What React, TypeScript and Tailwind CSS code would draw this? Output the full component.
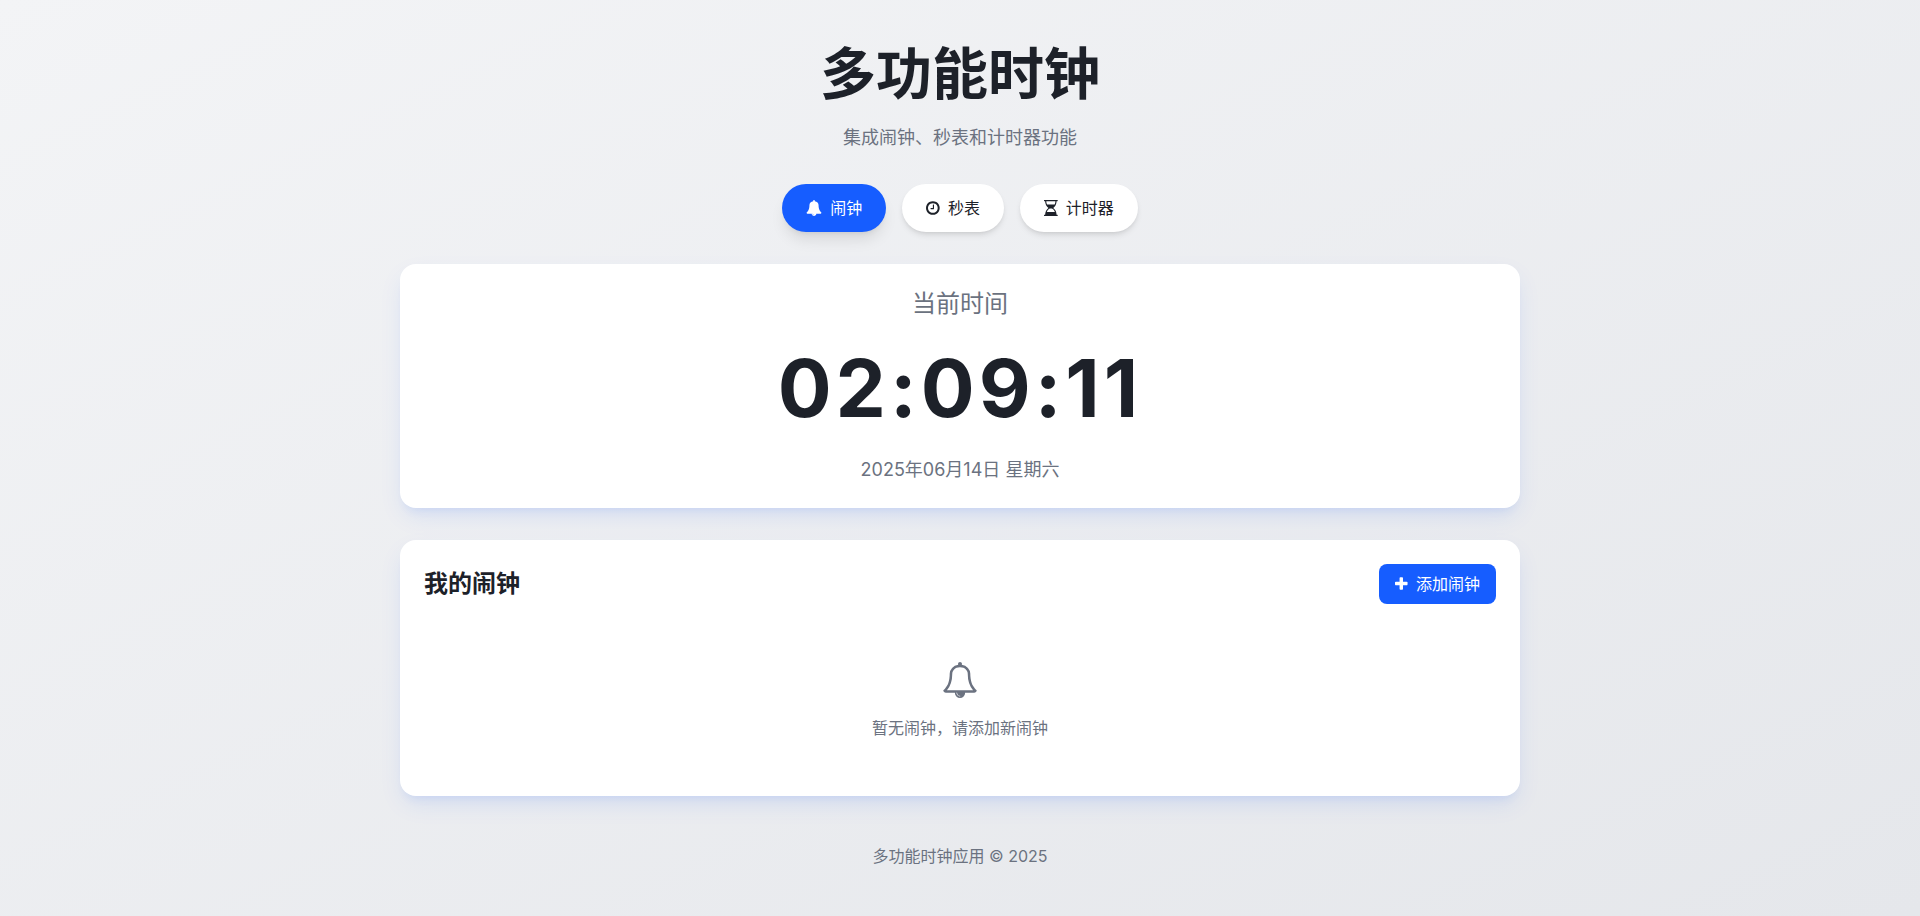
import { useState } from 'react'

const ICONS = {
  bell: {
    viewBox: '0 0 1792 1792',
    path: 'M912 1696q0-16-16-16-59 0-101.5-42.5t-42.5-101.5q0-16-16-16t-16 16q0 73 51.5 124.5t124.5 51.5q16 0 16-16zm816-288q0 52-38 90t-90 38h-448q0 106-75 181t-181 75-181-75-75-181h-448q-52 0-90-38t-38-90q50-42 91-88t85-119.5 74.5-158.5 50-206 19.5-260q0-152 117-282.5t307-158.5q-8-19-8-39 0-40 28-68t68-28 68 28 28 68q0 20-8 39 190 28 307 158.5t117 282.5q0 139 19.5 260t50 206 74.5 158.5 85 119.5 91 88z',
  },
  bellOutline: {
    viewBox: '0 0 1792 1792',
    path: 'M912 1696q0-16-16-16-59 0-101.5-42.5t-42.5-101.5q0-16-16-16t-16 16q0 73 51.5 124.5t124.5 51.5q16 0 16-16zm-666-288h1300q-266-300-266-832 0-51-24-105t-69-103-121.5-80.5-169.5-31.5-169.5 31.5-121.5 80.5-69 103-24 105q0 532-266 832zm1482 0q0 52-38 90t-90 38h-448q0 106-75 181t-181 75-181-75-75-181h-448q-52 0-90-38t-38-90q50-42 91-88t85-119.5 74.5-158.5 50-206 19.5-260q0-152 117-282.5t307-158.5q-8-19-8-39 0-40 28-68t68-28 68 28 28 68q0 20-8 39 190 28 307 158.5t117 282.5q0 139 19.5 260t50 206 74.5 158.5 85 119.5 91 88z',
  },
  clock: {
    viewBox: '128 0 1536 1792',
    path: 'M1024 544v448q0 14-9 23t-23 9h-320q-14 0-23-9t-9-23v-64q0-14 9-23t23-9h224v-352q0-14 9-23t23-9h64q14 0 23 9t9 23zm416 352q0-148-73-273t-198-198-273-73-273 73-198 198-73 273 73 273 198 198 273 73 273-73 198-198 73-273zm224 0q0 209-103 385.5t-279.5 279.5-385.5 103-385.5-103-279.5-279.5-103-385.5 103-385.5 279.5-279.5 385.5-103 385.5 103 279.5 279.5 103 385.5z',
  },
  hourglass: {
    viewBox: '128 0 1536 1792',
    path: 'M1536 128q0 261-106.5 461.5t-266.5 306.5q160 106 266.5 306.5t106.5 461.5h96q14 0 23 9t9 23v64q0 14-9 23t-23 9h-1472q-14 0-23-9t-9-23v-64q0-14 9-23t23-9h96q0-261 106.5-461.5t266.5-306.5q-160-106-266.5-306.5t-106.5-461.5h-96q-14 0-23-9t-9-23v-64q0-14 9-23t23-9h1472q14 0 23 9t9 23v64q0 14-9 23t-23 9h-96zm-128 0h-1024q0 206 85 384h854q85-178 85-384zm-57 1216q-54-141-145.5-241.5t-194.5-142.5h-230q-103 42-194.5 142.5t-145.5 241.5h910z',
  },
  plus: {
    viewBox: '192 0 1408 1792',
    path: 'M1600 736v192q0 40-28 68t-68 28h-416v416q0 40-28 68t-68 28h-192q-40 0-68-28t-28-68v-416h-416q-40 0-68-28t-28-68v-192q0-40 28-68t68-28h416v-416q0-40 28-68t68-28h192q40 0 68 28t28 68v416h416q40 0 68 28t28 68z',
  },
}

type IconName = keyof typeof ICONS

function Icon({ name, className }: { name: IconName; className: string }) {
  return (
    <svg viewBox={ICONS[name].viewBox} className={className} fill="currentColor" aria-hidden="true">
      <path d={ICONS[name].path} />
    </svg>
  )
}

const TABS: { id: string; label: string; icon: IconName }[] = [
  { id: 'alarm', label: '闹钟', icon: 'bell' },
  { id: 'stopwatch', label: '秒表', icon: 'clock' },
  { id: 'timer', label: '计时器', icon: 'hourglass' },
]

const CARD =
  'rounded-2xl bg-white p-6 shadow-[0_10px_25px_-3px_rgba(22,93,255,0.1),0_8px_10px_-6px_rgba(22,93,255,0.1)]'

export default function App() {
  const [activeTab, setActiveTab] = useState('alarm')

  return (
    <div className="min-h-screen bg-linear-to-br from-[#f3f4f6] to-[#e5e7eb] font-[Inter,'Noto_Sans_CJK_SC',sans-serif] text-[#1d2129]">
      <div className="mx-auto max-w-6xl px-4 py-8">
        <header className="mb-8 text-center">
          <h1 className="mb-2 text-[56px] leading-[84px] font-bold">多功能时钟</h1>
          <p className="text-lg text-[#6b7280]">集成闹钟、秒表和计时器功能</p>
        </header>

        <nav className="mb-8 flex flex-wrap justify-center gap-4">
          {TABS.map((tab) => (
            <button
              key={tab.id}
              type="button"
              onClick={() => setActiveTab(tab.id)}
              className={
                activeTab === tab.id
                  ? 'flex items-center gap-2 rounded-full bg-[#165dff] px-6 py-3 text-white shadow-lg'
                  : 'flex items-center gap-2 rounded-full bg-white px-6 py-3 shadow-md'
              }
            >
              <Icon name={tab.icon} className="h-4 w-auto" />
              {tab.label}
            </button>
          ))}
        </nav>

        <main className="space-y-8">
          <section className={`${CARD} text-center`}>
            <h2 className="mb-2 text-2xl text-[#6b7280]">当前时间</h2>
            <div className="mb-2 text-[80px] leading-[120px] font-bold tracking-wider">02:09:11</div>
            <p className="text-lg text-[#6b7280]">2025年06月14日 星期六</p>
          </section>

          <section className={CARD}>
            <div className="mb-6 flex items-center justify-between">
              <h2 className="text-2xl font-bold">我的闹钟</h2>
              <button
                type="button"
                className="flex items-center gap-2 rounded-lg bg-[#165dff] px-4 py-2 text-white"
              >
                <Icon name="plus" className="h-4 w-auto" />
                添加闹钟
              </button>
            </div>
            <div className="flex flex-col items-center py-8 text-[#6b7280]">
              <div className="mb-4 flex h-10 items-center">
                <Icon name="bellOutline" className="h-9 w-auto" />
              </div>
              <p>暂无闹钟，请添加新闹钟</p>
            </div>
          </section>
        </main>

        <footer className="mt-12 text-center text-[#6b7280]">多功能时钟应用 © 2025</footer>
      </div>
    </div>
  )
}
